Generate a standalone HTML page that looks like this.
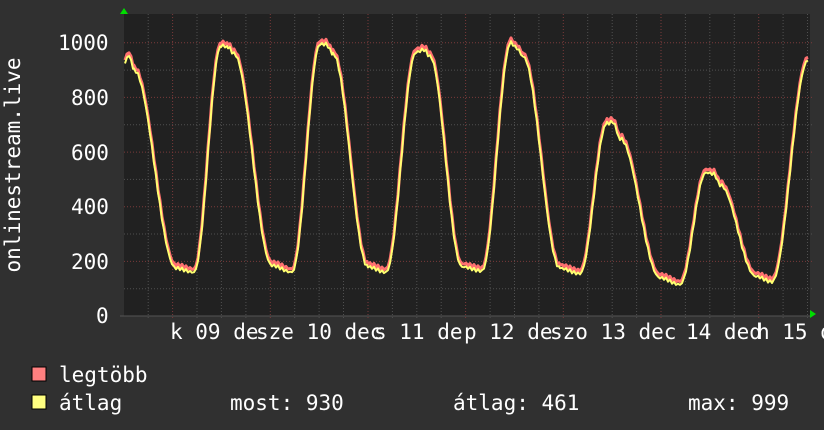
<!DOCTYPE html>
<html><head><meta charset="utf-8"><style>
body{margin:0;background:#303030;width:824px;height:430px;overflow:hidden;font-family:"DejaVu Sans Mono","Liberation Mono",monospace;color:#fff}
.t{position:absolute;font-size:21px;line-height:1;white-space:pre;color:#fff}
</style></head><body>
<svg id="s" width="824" height="430" style="position:absolute;left:0;top:0">
<rect x="124" y="14" width="686" height="302" fill="#212121"/>
<g id="grid"></g>
<path id="mx" fill="none" stroke="#ff7070" stroke-width="3" stroke-linejoin="round"/>
<path id="av" fill="none" stroke="#ffff70" stroke-width="2" stroke-linejoin="round"/>
<polygon points="120,14 128,14 124,8" fill="#00dd00"/>
<polygon points="810,310 810,318 816,314" fill="#00dd00"/>
<rect x="32" y="367" width="14" height="14" fill="#ff8080" stroke="#000" stroke-width="1"/>
<rect x="32" y="395" width="14" height="14" fill="#ffff80" stroke="#000" stroke-width="1"/>
<text transform="translate(20,165) rotate(-90)" text-anchor="middle" font-family="DejaVu Sans Mono, monospace" font-size="21" fill="#fff">onlinestream.live</text>
</svg>
<div class="t" style="left:58px;top:33px">1000</div>
<div class="t" style="left:71px;top:88px">800</div>
<div class="t" style="left:71px;top:143px">600</div>
<div class="t" style="left:71px;top:197px">400</div>
<div class="t" style="left:71px;top:252px">200</div>
<div class="t" style="left:96px;top:306px">0</div>
<div class="t" style="left:170px;top:322px">k 09 de</div>
<div class="t" style="left:256px;top:322px">sze 10 dec</div>
<div class="t" style="left:374px;top:322px">s 11 de</div>
<div class="t" style="left:464px;top:322px">p 12 de</div>
<div class="t" style="left:550px;top:322px">szo 13 dec</div>
<div class="t" style="left:686px;top:322px">14 ded</div>
<div class="t" style="left:757px;top:322px">h 15 d</div>
<div class="t" style="left:59px;top:365px">legtöbb</div>
<div class="t" style="left:59px;top:393px">átlag</div>
<div class="t" style="left:230px;top:393px">most: 930</div>
<div class="t" style="left:453px;top:393px">átlag: 461</div>
<div class="t" style="left:688px;top:393px">max: 999</div>
<script>
var g=document.getElementById('grid'),h='';
function Y(v){return 316-v*0.2732;}
for(var v=100;v<=1050;v+=100){var y=Y(v).toFixed(1);var maj=v%200==0;
h+='<line x1="124" x2="812" y1="'+y+'" y2="'+y+'" stroke="'+(maj?'#7a3a3a':'#505050')+'" stroke-dasharray="1,2"/>';}
for(var i=-1;i<30;i++){var x=172.6+i*24.42;if(x<125||x>809)continue;var maj=((i%4)+4)%4==0;
h+='<line y1="14" y2="320" x1="'+x.toFixed(1)+'" x2="'+x.toFixed(1)+'" stroke="'+(maj?'#7a3a3a':'#505050')+'" stroke-dasharray="1,2"/>';}
h+='<line x1="120" x2="812" y1="316" y2="316" stroke="#555"/>';
g.innerHTML=h;
var k=[[125,930],[129,955],[134,900],[176,175],[194,160],[221,990],[228,985],[234,960],[272,185],[292,160],[320,995],[326,995],[333,960],[368,180],[386,160],[416,965],[424,975],[430,950],[462,180],[482,165],[511,1000],[517,980],[523,950],[560,175],[580,155],[607,705],[613,710],[620,650],[660,140],[680,115],[706,525],[714,520],[720,480],[756,145],[772,125],[808,935]];
function pts(off){var d='';for(var j=0;j<k.length-1;j++){var a=k[j],b=k[j+1];for(var x=a[0];x<b[0];x+=2){var t=(x-a[0])/(b[0]-a[0]);var s=(1-Math.cos(Math.PI*t))/2;var v=a[1]+(b[1]-a[1])*s;v+=Math.sin(x*1.7)*6;var yy=Y(v+off);d+=(d?'L':'M')+x+','+yy.toFixed(1);}}
d+='L808,'+Y(935+off).toFixed(1);return d;}
document.getElementById('mx').setAttribute('d',pts(12));
document.getElementById('av').setAttribute('d',pts(0));
</script>
</body></html>
